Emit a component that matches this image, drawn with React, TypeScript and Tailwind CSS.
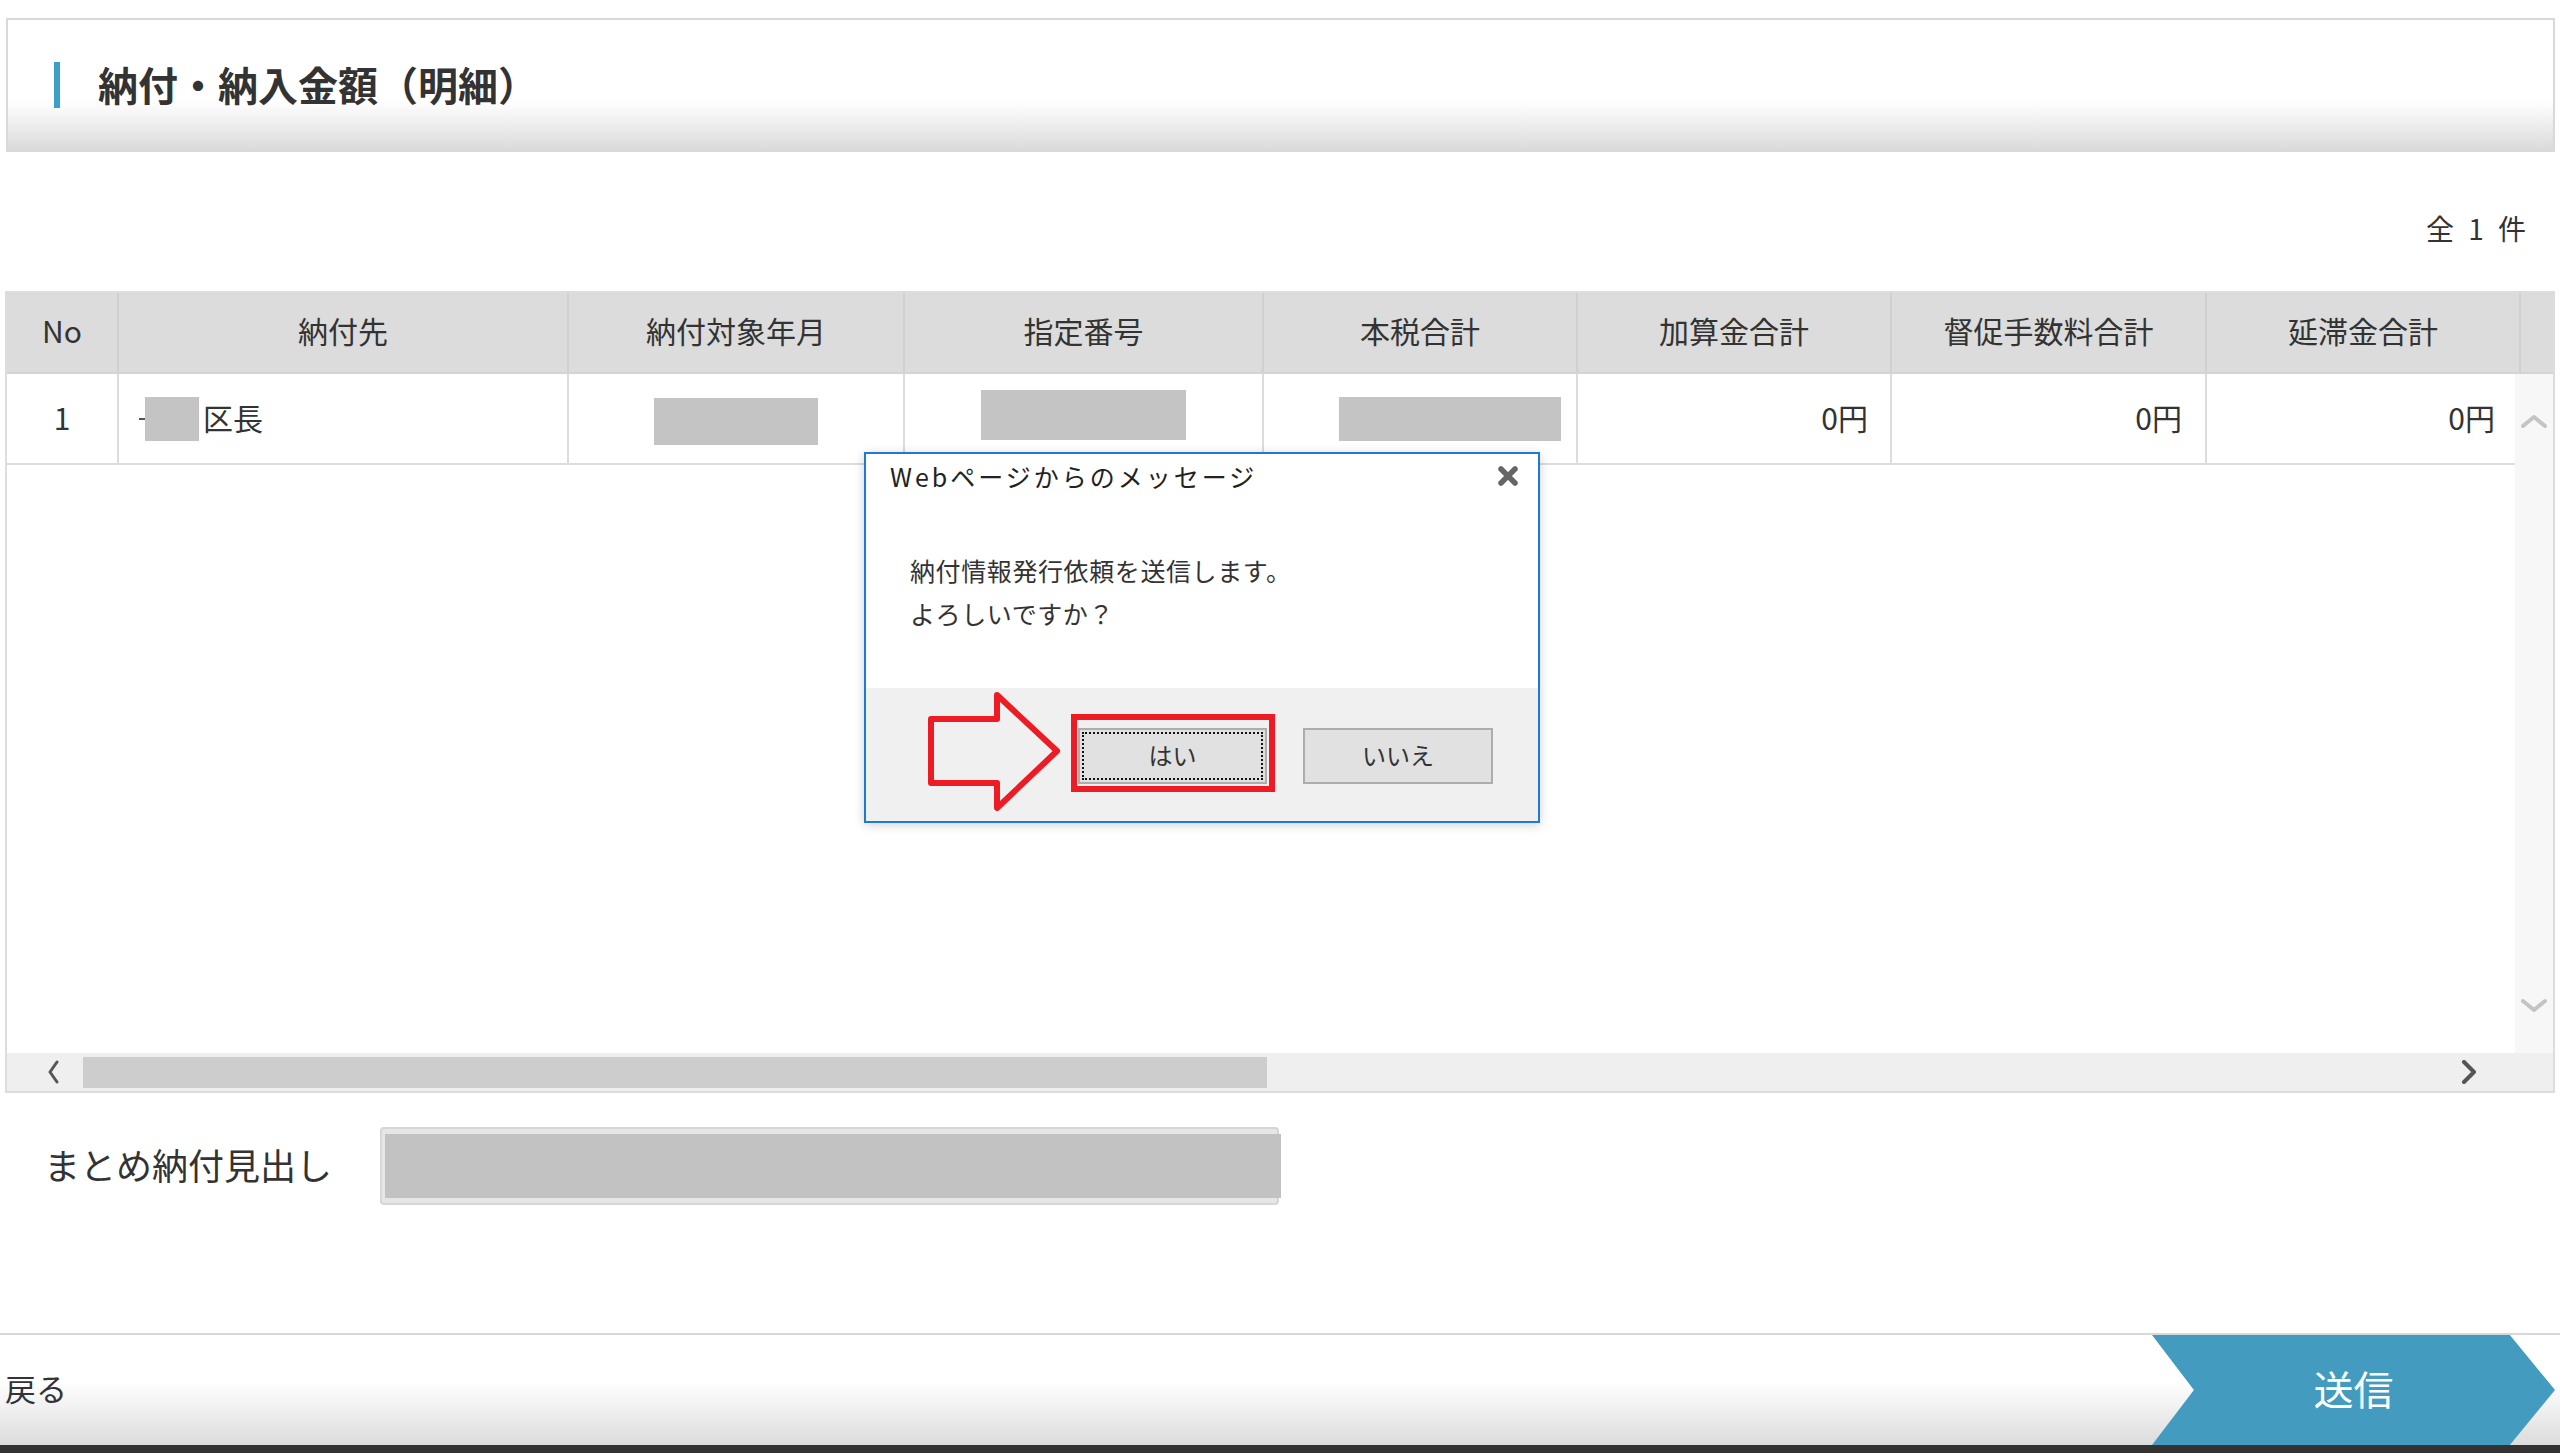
import React from "react";

const cols = [
    { w: "w-[112px]", bw: "w-[112px]", label: "No" },
    { w: "w-[450px]", bw: "w-[450px]", label: "納付先" },
    { w: "w-[336px]", bw: "w-[336px]", label: "納付対象年月" },
    { w: "w-[359px]", bw: "w-[359px]", label: "指定番号" },
    { w: "w-[314px]", bw: "w-[314px]", label: "本税合計" },
    { w: "w-[314px]", bw: "w-[314px]", label: "加算金合計" },
    { w: "w-[315px]", bw: "w-[315px]", label: "督促手数料合計" },
    { w: "w-[314px]", bw: "w-[308px]", label: "延滞金合計" },
];

const Masked = ({ className }: { className: string }) => (
    <div className={`bg-[#c4c4c4] ${className}`} />
);

const Chevron = ({ dir, className }: { dir: "up" | "down" | "left" | "right"; className: string }) => {
    const pts = {
        up: "2,12 13,3 24,12",
        down: "2,3 13,12 24,3",
        left: "10,2 3,12 10,22",
        right: "3,2 13,12 3,22",
    }[dir];
    const box = dir === "up" || dir === "down" ? "0 0 26 15" : "0 0 16 24";
    return (
        <svg viewBox={box} className={className} fill="none" stroke="currentColor" strokeLinecap="round" strokeLinejoin="round">
            <polyline points={pts} />
        </svg>
    );
};

const DataTable = () => (
    <div className="ml-[5px] flex h-[802px] w-[2550px] flex-col border-2 border-[#dddddd]">
        <div className="flex h-[81px] border-b-2 border-[#d4d4d4] bg-[#dcdcdc] text-[30px] text-[#333]">
            {cols.map((c) => (
                <div key={c.label} className={`${c.w} flex shrink-0 items-center justify-center border-r-2 border-[#d0d0d0] pb-[5px]`}>
                    {c.label}
                </div>
            ))}
            <div className="flex-1" />
        </div>
        <div className="flex h-[679px]">
            <div className="flex flex-1 flex-col">
                <div className="flex h-[91px] border-b-2 border-[#dcdcdc] text-[30px] text-[#333]">
                    <div className={`${cols[0].bw} flex shrink-0 items-center justify-center border-r-2 border-[#dcdcdc] pb-[3px]`}>1</div>
                    <div className={`${cols[1].bw} flex shrink-0 items-center border-r-2 border-[#dcdcdc] pl-[20px]`}>
                        <span className="h-[2px] w-[6px] bg-[#555]" />
                        <Masked className="h-[44px] w-[54px]" />
                        <span className="mb-[3px] ml-[4px]">区長</span>
                    </div>
                    <div className={`${cols[2].bw} flex shrink-0 items-center justify-center border-r-2 border-[#dcdcdc]`}>
                        <Masked className="mt-[6px] h-[47px] w-[164px]" />
                    </div>
                    <div className={`${cols[3].bw} flex shrink-0 items-center justify-center border-r-2 border-[#dcdcdc]`}>
                        <Masked className="mb-[8px] h-[50px] w-[205px]" />
                    </div>
                    <div className={`${cols[4].bw} flex shrink-0 items-center justify-end border-r-2 border-[#dcdcdc] pr-[15px]`}>
                        <Masked className="h-[44px] w-[222px]" />
                    </div>
                    <div className={`${cols[5].bw} flex shrink-0 items-center justify-end border-r-2 border-[#dcdcdc] pb-[3px] pr-[22px]`}>0円</div>
                    <div className={`${cols[6].bw} flex shrink-0 items-center justify-end border-r-2 border-[#dcdcdc] pb-[3px] pr-[23px]`}>0円</div>
                    <div className={`${cols[7].bw} flex shrink-0 items-center justify-end pb-[3px] pr-[20px]`}>0円</div>
                </div>
                <div className="flex-1 bg-white" />
            </div>
            <div className="flex w-[38px] flex-col items-center justify-between bg-[#f7f7f7] pb-[40px] pt-[40px] text-[#c4c4c4]">
                <Chevron dir="up" className="h-[15px] w-[26px] stroke-[4]" />
                <Chevron dir="down" className="h-[15px] w-[26px] stroke-[4]" />
            </div>
        </div>
        <div className="flex h-[38px] items-center bg-[#efefef]">
            <div className="flex w-[76px] items-center pl-[40px] text-[#555]">
                <Chevron dir="left" className="h-[24px] w-[16px] stroke-[3]" />
            </div>
            <div className="h-[31px] w-[1184px] bg-[#cdcdcd]" />
            <div className="flex-1" />
            <div className="mr-[76px] text-[#555]">
                <Chevron dir="right" className="h-[24px] w-[16px] stroke-[4]" />
            </div>
        </div>
    </div>
);

const ConfirmDialog = () => (
    <div className="absolute left-[864px] top-[452px] flex h-[371px] w-[676px] flex-col border-2 border-[#1d7bd4] bg-white shadow-[0_2px_10px_rgba(0,0,0,0.18)]">
        <div className="flex h-[234px] flex-col">
            <div className="flex items-center justify-between pl-[24px] pr-[19px] pt-[6px] text-[25px] leading-[32px] tracking-[3px] text-[#222]">
                <span>Webページからのメッセージ</span>
                <svg viewBox="0 0 22 22" className="h-[22px] w-[22px] text-[#666]" stroke="currentColor" strokeWidth="5.5" strokeLinecap="round">
                    <line x1="4" y1="4" x2="18" y2="18" />
                    <line x1="18" y1="4" x2="4" y2="18" />
                </svg>
            </div>
            <div className="mt-[57px] pl-[44px] text-[25px] leading-[43px] tracking-[0.6px] text-[#333]">
                <p>納付情報発行依頼を送信します。</p>
                <p>よろしいですか？</p>
            </div>
        </div>
        <div className="flex flex-1 gap-[36px] bg-[#f0f0f0] pl-[212px] pt-[40px]">
            <button className="flex h-[56px] w-[189px] items-center justify-center border-2 border-[#adadad] bg-[#e1e1e1] p-[2px]">
                <span className="flex h-full w-full items-center justify-center border-2 border-dotted border-[#111] pb-[3px] text-[24px] text-[#333]">
                    はい
                </span>
            </button>
            <button className="flex h-[56px] w-[190px] items-center justify-center border-2 border-[#adadad] bg-[#e1e1e1] pb-[3px] text-[24px] text-[#333]">
                いいえ
            </button>
        </div>
        <div className="absolute left-[205px] top-[260px] h-[78px] w-[204px] border-[6px] border-[#ed1c24]" />
        <svg viewBox="0 0 133 121" className="absolute left-[62px] top-[237px] h-[121px] w-[133px]" fill="none" stroke="#ed1c24" strokeWidth="6" strokeLinejoin="round">
            <polygon points="3,28 69,28 69,4 129,60 69,117 69,92 3,92" />
        </svg>
    </div>
);

export default function App() {
    return (
        <div className="relative flex h-[1453px] w-[2560px] flex-col overflow-hidden bg-white font-['Noto_Sans_CJK_JP','Noto_Sans',sans-serif] text-[#333]">
            <div className="mt-[18px] ml-[6px] flex h-[134px] w-[2549px] items-start border-2 border-[#d9d9d9] bg-[linear-gradient(to_bottom,#ffffff_0%,#ffffff_62%,#dadada_100%)] pl-[46px] pt-[42px]">
                <div className="h-[46px] w-[6px] bg-[#3a9fc9]" />
                <h1 className="ml-[38px] text-[40px] font-bold leading-[44px] text-[#333]">納付・納入金額（明細）</h1>
            </div>

            <div className="flex h-[139px] justify-end pr-[30px] pt-[59px] text-[28px] leading-[34px] tracking-[4px]">
                全 1 件
            </div>

            <DataTable />

            <div className="flex h-[240px] items-start pl-[44px] pt-[34px]">
                <div className="h-[78px] w-[336px] pb-[4px] text-[36px] leading-[74px] text-[#333]">まとめ納付見出し</div>
                <div className="h-[78px] w-[899px] rounded-[4px] border-2 border-[#d6d6d6] bg-[#e6e6e6] pl-[3px] pt-[5px]">
                    <div className="h-[64px] w-[896px] bg-[#c2c2c2]" />
                </div>
            </div>

            <div className="flex h-[112px] items-stretch justify-between border-t-2 border-[#d8d8d8] bg-[linear-gradient(to_bottom,#ffffff_0%,#ffffff_42%,#dcdcdc_100%)]">
                <div className="flex items-center pb-[4px] pl-[5px] text-[31px] text-[#333]">戻る</div>
                <div className="mr-[5px] flex w-[403px] items-center justify-center bg-[#449bc0] pb-[4px] text-[40px] text-white [clip-path:polygon(0_0,88.8%_0,100%_50%,88.8%_100%,0_100%,10.4%_50%)]">
                    送信
                </div>
            </div>
            <div className="h-[8px] bg-[#333333]" />

            <ConfirmDialog />
        </div>
    );
}
